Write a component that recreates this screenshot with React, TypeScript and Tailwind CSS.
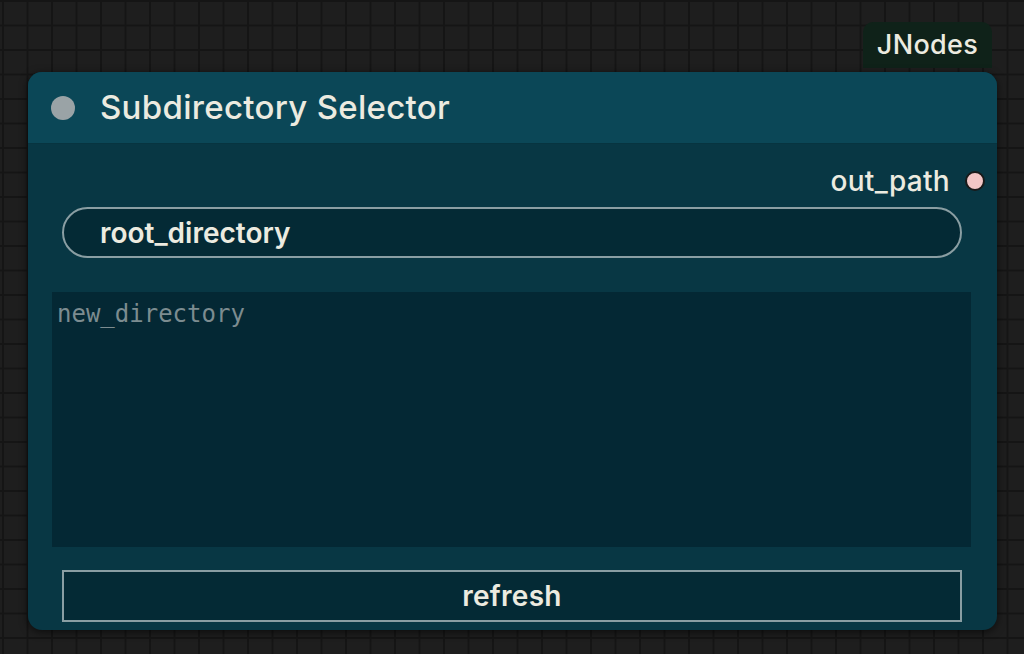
export default function App() {
  return (
    <div className="min-h-screen w-full bg-[#1e1e1e] bg-[linear-gradient(to_right,#151515_2px,transparent_2px),linear-gradient(to_bottom,#151515_2px,transparent_2px)] bg-[size:24.5px_24.5px] bg-[position:2px_0px] pt-[22px] pl-[28px] font-['Inter','Liberation_Sans',sans-serif]">
      <div className="w-[969px] flex flex-col">
        {/* badge */}
        <div className="self-end mr-[5px] h-[46px] px-[14px] rounded-t-[10px] bg-[#0f2219] flex items-center text-[27px] font-medium text-[#ecebe0] tracking-[0.3px]">
          JNodes
        </div>

        {/* node */}
        <div className="mt-[4px] h-[558px] rounded-[14px] bg-[#083744] flex flex-col overflow-hidden shadow-[0_2px_8px_rgba(0,0,0,0.6)]">
          <div className="h-[72px] shrink-0 bg-[#0b4757] flex items-center pl-[23px] border-b border-[#073440]">
            <div className="w-6 h-6 rounded-full bg-[#9aa3a6]" />
            <span className="ml-[25px] text-[33px] font-medium text-[#ecebe0] tracking-[0.3px]">
              Subdirectory Selector
            </span>
          </div>

          <div className="flex flex-col flex-1 pt-[20px]">
            {/* output */}
            <div className="h-[34px] flex items-center justify-end pr-[12px]">
              <span className="text-[28px] font-medium text-[#ecebe0] tracking-[0.3px]">out_path</span>
              <div className="ml-[15px] w-5 h-5 rounded-full bg-[#f2c6c6] border-2 border-[#1a1a1a]" />
            </div>

            {/* combo */}
            <div className="mt-[9px] ml-[34px] mr-[35px] h-[51px] rounded-full border-2 border-[#8a9ea3] bg-[#042a35] flex items-center pl-[36px]">
              <span className="text-[28px] font-semibold text-[#ecebe0]">root_directory</span>
            </div>

            {/* textarea */}
            <div className="mt-[34px] ml-[24px] mr-[26px] h-[255px] bg-[#042834] pl-[5px] pt-[4px]">
              <span className="text-[24px] leading-[36px] font-['DejaVu_Sans_Mono',monospace] text-[#7c8c90]">
                new_directory
              </span>
            </div>

            {/* button */}
            <div className="mt-[23px] ml-[34px] mr-[35px] h-[52px] border-2 border-[#8a9ea3] bg-[#042a35] flex items-center justify-center">
              <span className="text-[28px] font-semibold text-[#ecebe0] tracking-[0.3px]">refresh</span>
            </div>
          </div>
        </div>
      </div>
    </div>
  )
}
